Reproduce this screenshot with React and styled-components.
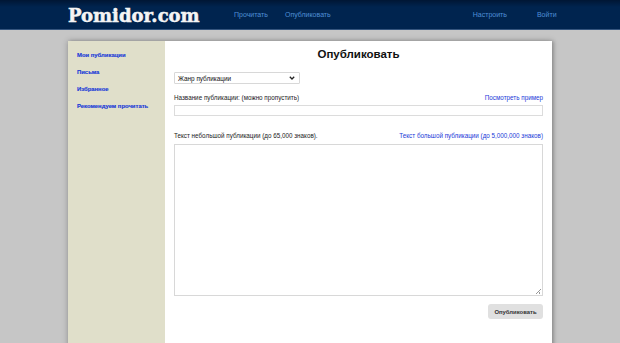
import React from "react";
import styled, { createGlobalStyle } from "styled-components";

const GlobalStyle = createGlobalStyle`
  html, body {
    margin: 0;
    padding: 0;
    background: #c6c6c6;
    font-family: "Liberation Sans", Arial, sans-serif;
  }
`;

const App = () => {
  return (
    <Page>
      <GlobalStyle />
      <Header>
        <HeaderInner>
          <Logo>Pomidor.com</Logo>
          <NavGroup>
            <NavLink>Прочитать</NavLink>
            <NavLink>Опубликовать</NavLink>
          </NavGroup>
          <NavGroup right>
            <NavLink>Настроить</NavLink>
            <NavLink>Войти</NavLink>
          </NavGroup>
        </HeaderInner>
      </Header>
      <Card>
        <Sidebar>
          <SideLink>Мои публикации</SideLink>
          <SideLink>Письма</SideLink>
          <SideLink>Избранное</SideLink>
          <SideLink>Рекомендуем прочитать</SideLink>
        </Sidebar>
        <Content>
          <Title>Опубликовать</Title>
          <SelectBox>
            <span>Жанр публикации</span>
            <svg width="6" height="4" viewBox="0 0 6 4">
              <path d="M0.8 0.8 L3 3 L5.2 0.8" fill="none" stroke="#222" strokeWidth="1.3" />
            </svg>
          </SelectBox>
          <LabelRow top={10}>
            <Label>Название публикации: (можно пропустить)</Label>
            <RightLink>Посмотреть пример</RightLink>
          </LabelRow>
          <TextInput />
          <LabelRow top={16}>
            <Label>Текст небольшой публикации (до 65,000 знаков).</Label>
            <RightLink>Текст большой публикации (до 5,000,000 знаков)</RightLink>
          </LabelRow>
          <TextArea />
          <ButtonRow>
            <SubmitButton>Опубликовать</SubmitButton>
          </ButtonRow>
        </Content>
      </Card>
    </Page>
  );
};

export default App;

const Page = styled.div`
  width: 620px;
  height: 343px;
  overflow: hidden;
  background: #c6c6c6;
`;

const Header = styled.div`
  height: 29px;
  background: linear-gradient(#001634 0px, #00244f 7px, #00244f 100%);
  border-bottom: 1px solid #35557e;
`;

const HeaderInner = styled.div`
  display: flex;
  align-items: center;
  height: 100%;
  padding-left: 68px;
`;

const Logo = styled.div`
  font-family: "DejaVu Serif", serif;
  font-weight: bold;
  font-size: 18px;
  color: #f4f4f4;
  -webkit-text-stroke: 0.5px #f4f4f4;
  width: 166px;
  padding-top: 1px;
`;

const NavGroup = styled.div`
  display: flex;
  margin-left: ${(p) => (p.right ? "142px" : "0")};
  gap: ${(p) => (p.right ? "30px" : "17px")};
`;

const NavLink = styled.span`
  font-size: 7px;
  color: #4f8fd6;
`;

const Card = styled.div`
  display: flex;
  margin: 11px 0 0 68px;
  width: 484px;
  height: 320px;
  box-shadow: 0 0 6px rgba(0, 0, 0, 0.28), 2px 0 3px rgba(0, 0, 0, 0.15);
`;

const Sidebar = styled.div`
  width: 97px;
  background: #e0dfca;
  padding: 10px 0 0 9px;
  box-sizing: border-box;
  display: flex;
  flex-direction: column;
  gap: 9px;
`;

const SideLink = styled.span`
  font-size: 5.9px;
  font-weight: bold;
  color: #1a3ad8;
  -webkit-text-stroke: 0.15px #1a3ad8;
  line-height: 8px;
`;

const Content = styled.div`
  flex: 1;
  background: #fff;
  padding: 6px 9px 0 9px;
  display: flex;
  flex-direction: column;
`;

const Title = styled.h1`
  margin: 0;
  text-align: center;
  font-size: 11.5px;
  font-weight: bold;
  color: #111;
  line-height: 14px;
`;

const SelectBox = styled.div`
  margin-top: 11px;
  width: 126px;
  height: 12px;
  box-sizing: border-box;
  display: flex;
  align-items: center;
  justify-content: space-between;
  font-size: 6.4px;
  padding: 0 4px 0 3px;
  border: 1px solid #d8d8d8;
  border-radius: 1px;
  background: #fff;
  color: #111;
`;

const LabelRow = styled.div`
  display: flex;
  justify-content: space-between;
  align-items: baseline;
  margin-top: ${(p) => p.top}px;
  line-height: 8px;
`;

const Label = styled.span`
  font-size: 6.3px;
  color: #222;
`;

const RightLink = styled.span`
  font-size: 6.3px;
  color: #1a3ad8;
`;

const TextInput = styled.div`
  margin-top: 3px;
  height: 9px;
  border: 1px solid #dcdcdc;
  background: #fff;
`;

const TextArea = styled.div`
  position: relative;
  margin-top: 4px;
  height: 150px;
  border: 1px solid #d8d8d8;
  background: #fff;
  &::after {
    content: "";
    position: absolute;
    right: 1px;
    bottom: 1px;
    width: 5px;
    height: 5px;
    background: linear-gradient(135deg, transparent 45%, #999 45%, #999 55%, transparent 55%, transparent 70%, #999 70%, #999 80%, transparent 80%);
  }
`;

const ButtonRow = styled.div`
  display: flex;
  justify-content: flex-end;
  margin-top: 8px;
`;

const SubmitButton = styled.button`
  width: 55px;
  height: 15px;
  border: none;
  border-radius: 3px;
  background: #e0e0e0;
  font-family: "Liberation Sans", Arial, sans-serif;
  font-size: 5.9px;
  font-weight: bold;
  color: #333;
  padding: 0;
`;
